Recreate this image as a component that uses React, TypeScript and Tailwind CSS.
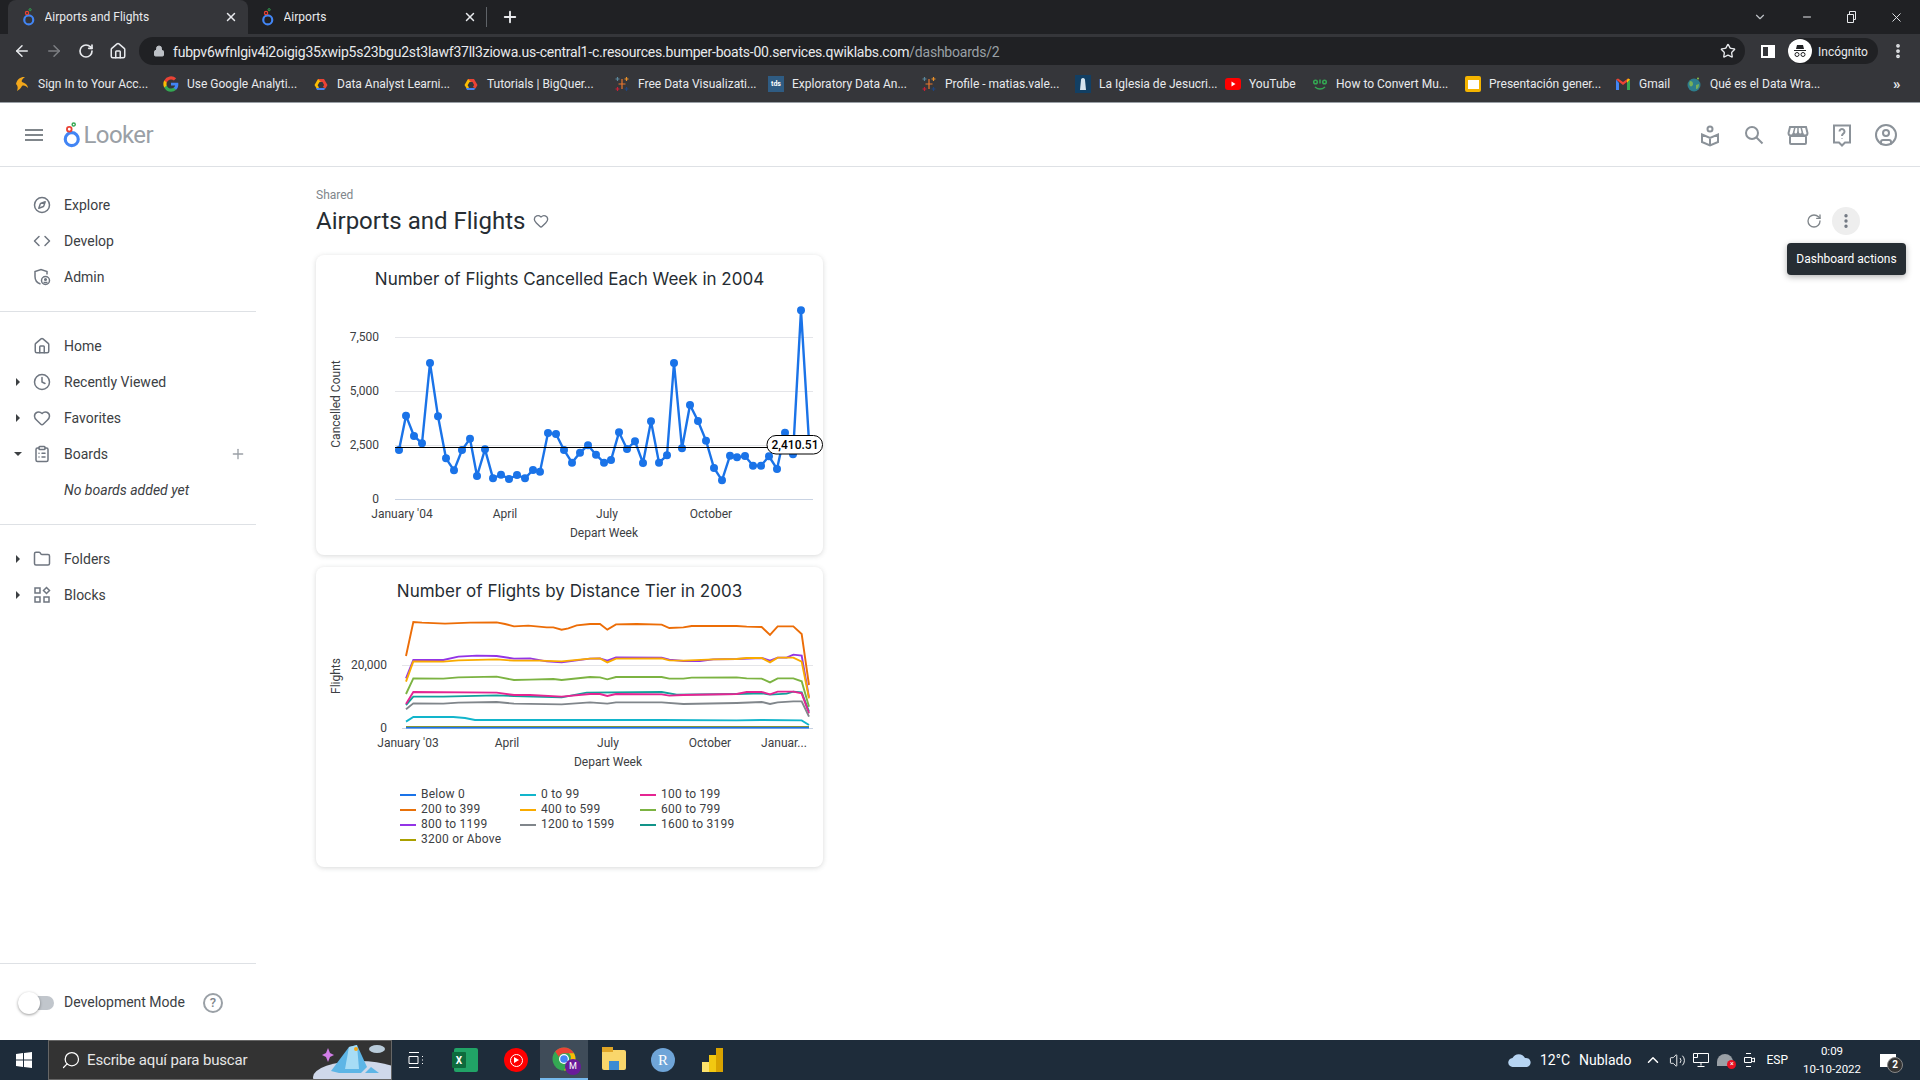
import { ChevronDown, Code, Compass, Clock, EllipsisVertical, Heart, Home, Lock, Minus, Plus, RotateCw, Search, Star, X, ArrowLeft, ArrowRight, House, Folder, ClipboardList, CircleUser, Volume2, ChevronUp } from 'lucide-react';
import type { ReactNode } from 'react';

const scale = (pts: number[][], ox: number, oy: number) => pts.map(([x, y]) => `${ox + x / 3},${oy + y / 3}`).join(' ');

const cancelled = [
  [27, 465], [48, 362], [72, 423], [96, 445], [120, 204], [144, 364], [168, 490], [192, 526], [216, 465], [240, 431],
  [261, 543], [285, 463], [309, 550], [333, 539], [357, 552], [381, 540], [405, 550], [429, 525], [450, 530], [474, 414],
  [498, 417], [522, 465], [546, 503], [570, 473], [594, 451], [618, 479], [642, 503], [663, 495], [687, 412], [711, 462],
  [735, 439], [759, 504], [783, 379], [807, 503], [831, 481], [852, 204], [876, 460], [900, 330], [924, 378], [948, 437],
  [972, 519], [996, 556], [1020, 482], [1041, 487], [1065, 483], [1089, 512], [1113, 512], [1137, 484], [1161, 522],
  [1185, 413], [1209, 478], [1233, 46], [1257, 440],
];

const tiers: { color: string; pts: number[][] }[] = [
  { color: '#ec6d07', pts: [[48, 138], [70, 36], [96, 38], [165, 41], [240, 38], [320, 37], [345, 42], [372, 49], [415, 47], [470, 52], [490, 52], [515, 59], [535, 55], [560, 46], [600, 42], [630, 42], [652, 59], [678, 43], [740, 42], [815, 44], [838, 54], [880, 52], [905, 48], [1040, 48], [1070, 50], [1115, 51], [1140, 75], [1163, 49], [1210, 49], [1235, 72], [1257, 225]] },
  { color: '#9334e6', pts: [[48, 205], [70, 150], [160, 150], [205, 140], [260, 137], [320, 138], [372, 146], [420, 145], [470, 154], [515, 157], [600, 146], [630, 145], [652, 152], [678, 142], [815, 143], [838, 149], [880, 153], [930, 153], [970, 148], [1040, 147], [1115, 144], [1140, 152], [1163, 143], [1190, 143], [1210, 134], [1235, 137], [1257, 262]] },
  { color: '#f9ab00', pts: [[48, 215], [70, 154], [160, 155], [205, 151], [320, 148], [372, 152], [450, 152], [515, 154], [600, 146], [630, 145], [652, 157], [678, 146], [815, 145], [838, 151], [880, 152], [970, 148], [1040, 147], [1070, 144], [1115, 144], [1140, 157], [1163, 143], [1210, 143], [1235, 155], [1257, 265]] },
  { color: '#7cb342', pts: [[48, 252], [70, 205], [160, 206], [205, 202], [320, 200], [372, 210], [420, 209], [490, 207], [515, 210], [600, 201], [630, 202], [652, 208], [678, 201], [815, 201], [838, 206], [880, 206], [905, 203], [1040, 202], [1070, 205], [1115, 206], [1140, 217], [1163, 205], [1210, 205], [1235, 214], [1257, 290]] },
  { color: '#12a09a', pts: [[48, 285], [70, 260], [160, 260], [320, 256], [372, 258], [515, 262], [590, 248], [815, 246], [860, 254], [1040, 252], [1115, 250], [1140, 254], [1190, 251], [1210, 245], [1235, 247], [1257, 305]] },
  { color: '#e52592', pts: [[48, 282], [70, 246], [320, 248], [372, 255], [420, 255], [515, 260], [600, 252], [630, 252], [652, 258], [678, 252], [815, 253], [838, 257], [880, 255], [1040, 252], [1070, 246], [1115, 246], [1140, 253], [1163, 245], [1210, 245], [1235, 250], [1257, 310]] },
  { color: '#80868b', pts: [[48, 298], [70, 280], [160, 281], [205, 278], [320, 276], [372, 281], [515, 283], [600, 277], [652, 281], [678, 277], [815, 277], [880, 282], [1040, 279], [1115, 276], [1140, 282], [1163, 277], [1210, 274], [1235, 274], [1257, 320]] },
  { color: '#12b5cb', pts: [[48, 335], [70, 321], [190, 321], [225, 324], [255, 330], [815, 330], [1040, 331], [1115, 330], [1235, 331], [1257, 345]] },
  { color: '#aaa000', pts: [[48, 351], [1257, 351]] },
  { color: '#1a73e8', pts: [[48, 353], [1257, 353]] },
];

const legend = [
  { label: 'Below 0', color: 'bg-[#1a73e8]' },
  { label: '0 to 99', color: 'bg-[#12b5cb]' },
  { label: '100 to 199', color: 'bg-[#e52592]' },
  { label: '200 to 399', color: 'bg-[#e8710a]' },
  { label: '400 to 599', color: 'bg-[#f9ab00]' },
  { label: '600 to 799', color: 'bg-[#7cb342]' },
  { label: '800 to 1199', color: 'bg-[#9334e6]' },
  { label: '1200 to 1599', color: 'bg-[#80868b]' },
  { label: '1600 to 3199', color: 'bg-[#129489]' },
  { label: '3200 or Above', color: 'bg-[#aaa000]' },
];

function LookerMark({ size }: { size: number }) {
  return (
    <svg width={size * 0.75} height={size} viewBox="0 0 15 20" fill="none">
      <circle cx="7.5" cy="13.2" r="5" stroke="#4285f4" strokeWidth="2.4" />
      <circle cx="5.6" cy="5.6" r="1.8" stroke="#ea4335" strokeWidth="1.4" />
      <circle cx="9" cy="1.9" r="1.2" stroke="#34a853" strokeWidth="1.1" />
    </svg>
  );
}

function GcpIcon() {
  return (
    <svg width="16" height="16" viewBox="0 0 16 16" fill="none">
      <path d="M4 13 1.5 9 5 3h3v3H6.5L4.6 9.2 6 11.5z" fill="#fbbc04" />
      <path d="M5 3h6l3.5 6-2 3.5-2.6-1.5 1.2-2L9.5 6H8z" fill="#ea4335" />
      <path d="M12.500 12.500 11 14H4l-1-2h8z" fill="#4285f4" />
    </svg>
  );
}

function TableauIcon() {
  return (
    <svg width="16" height="16" viewBox="0 0 16 16" strokeWidth="1.2" fill="none">
      <path d="M8 3v10M4.500 8h7" stroke="#e8762d" />
      <path d="M3.500 1v4M1.500 3h4" stroke="#5b879b" />
      <path d="M12.500 1v4M10.500 3h4" stroke="#eb9129" />
      <path d="M3.500 11v4M1.500 13h4" stroke="#c72035" />
      <path d="M12.500 11v4M10.500 13h4" stroke="#1f457e" />
    </svg>
  );
}

const bookmarks: { label: string; width: string; icon: ReactNode }[] = [
  {
    label: 'Sign In to Your Acc...',
    width: 'w-[149px]',
    icon: (
      <svg width="16" height="16" viewBox="0 0 16 16" fill="#f2a71b">
        <path d="M2 8C3 3 7 .5 11 1 8 3 7 5 8 6c3 1 6 3 6 6-2-2-4-3-6-2-1 2-3 4-5 5 1-3 1-5-1-7z" />
      </svg>
    ),
  },
  {
    label: 'Use Google Analyti...',
    width: 'w-[150px]',
    icon: (
      <svg width="16" height="16" viewBox="0 0 24 24">
        <path fill="#4285f4" d="M23 12.300c0-.8-.1-1.600-.2-2.300H12v4.400h6.200a5.300 5.300 0 0 1-2.300 3.400v2.900h3.700c2.200-2 3.400-5 3.400-8.400z" />
        <path fill="#34a853" d="M12 23.500c3.100 0 5.700-1 7.600-2.800l-3.700-2.900c-1 .7-2.300 1.100-3.900 1.100-3 0-5.500-2-6.400-4.700H1.800v3A11.500 11.500 0 0 0 12 23.500z" />
        <path fill="#fbbc05" d="M5.600 14.200a7 7 0 0 1 0-4.400v-3H1.800a11.500 11.500 0 0 0 0 10.400z" />
        <path fill="#ea4335" d="M12 5.100c1.700 0 3.200.6 4.400 1.700l3.300-3.300A11.500 11.500 0 0 0 1.800 6.800l3.800 3c.9-2.700 3.400-4.700 6.400-4.700z" />
      </svg>
    ),
  },
  { label: 'Data Analyst Learni...', width: 'w-[150px]', icon: <GcpIcon /> },
  { label: 'Tutorials | BigQuer...', width: 'w-[151px]', icon: <GcpIcon /> },
  { label: 'Free Data Visualizati...', width: 'w-[154px]', icon: <TableauIcon /> },
  {
    label: 'Exploratory Data An...',
    width: 'w-[153px]',
    icon: <span className="flex h-[16px] w-[16px] items-center justify-center bg-[#2f5c83] text-[7px] font-bold text-white">tds</span>,
  },
  { label: 'Profile - matias.vale...', width: 'w-[154px]', icon: <TableauIcon /> },
  {
    label: 'La Iglesia de Jesucri...',
    width: 'w-[150px]',
    icon: (
      <svg width="16" height="18" viewBox="0 0 16 18">
        <rect width="16" height="18" fill="#123f63" />
        <path d="M8 3c1.500 0 2 1 2 2l1 10H5l1-10c0-1 .5-2 2-2z" fill="#d6e4ee" />
      </svg>
    ),
  },
  {
    label: 'YouTube',
    width: 'w-[87px]',
    icon: (
      <svg width="16" height="16" viewBox="0 0 16 16">
        <rect y="2" width="16" height="12" rx="3" fill="#f00" />
        <path d="m6.500 5.500 4 2.500-4 2.500z" fill="#fff" />
      </svg>
    ),
  },
  {
    label: 'How to Convert Mu...',
    width: 'w-[153px]',
    icon: (
      <svg width="16" height="16" viewBox="0 0 16 16" fill="none" stroke="#34a853" strokeWidth="1.500">
        <circle cx="3.500" cy="6" r="1.800" />
        <circle cx="12.500" cy="6" r="1.800" />
        <path d="M8 3.500v4M3 11c3 2.500 7 2.500 10 0" />
      </svg>
    ),
  },
  {
    label: 'Presentación gener...',
    width: 'w-[150px]',
    icon: (
      <span className="flex h-[16px] w-[16px] items-center justify-center rounded-[2px] bg-[#f4b400]">
        <span className="h-[9px] w-[11px] bg-white" />
      </span>
    ),
  },
  {
    label: 'Gmail',
    width: 'w-[71px]',
    icon: (
      <svg width="16" height="16" viewBox="0 0 16 16">
        <path d="M1 3.500V14h3V7z" fill="#4285f4" />
        <path d="M15 3.500V14h-3V7z" fill="#34a853" />
        <path d="M1 3.500 8 9l7-5.500-2-1L8 6 3 2.500z" fill="#ea4335" />
        <path d="m12 7 3-3.500L13 2.500 12 4z" fill="#fbbc04" />
      </svg>
    ),
  },
  {
    label: 'Qué es el Data Wra...',
    width: 'w-[150px]',
    icon: (
      <svg width="16" height="16" viewBox="0 0 16 16">
        <circle cx="8" cy="9" r="6.500" fill="#2d7d8c" />
        <path d="M4 5c2 0 3 1 3 3s-2 3-3 2-1-3 0-5zM10 9l3-1c0 3-1 5-3 5z" fill="#76b058" />
        <circle cx="12" cy="2.500" r="1" fill="#8bc34a" />
      </svg>
    ),
  },
];

function ChromeTab({ title, active }: { title: string; active?: boolean }) {
  return (
    <div className={active ? 'flex h-[34px] w-[240px] items-center rounded-t-lg bg-[#35363a] pl-[14px] pr-[10px]' : 'flex h-[34px] w-[238px] items-center pl-[13px] pr-[9px]'}>
      <LookerMark size={18} />
      <span className="ml-[9px] flex-1 truncate text-[12px] text-[#e8eaed]">{title}</span>
      <X size={14} strokeWidth={2.5} className="text-[#e8eaed]" />
    </div>
  );
}

function SideItem({ icon, label, caret, italic }: { icon?: ReactNode; label: string; caret?: 'right' | 'down'; italic?: boolean }) {
  return (
    <div className="flex h-[36px] items-center">
      <div className="flex w-[30px] justify-center pl-[6px]">
        {caret === 'right' && <span className="h-0 w-0 border-y-[4px] border-l-[4px] border-y-transparent border-l-[#3c4043]" />}
        {caret === 'down' && <span className="h-0 w-0 border-x-[4px] border-t-[4px] border-x-transparent border-t-[#3c4043]" />}
      </div>
      <div className="flex w-[24px] justify-center text-[#6f7680]">{icon}</div>
      <span className={italic ? 'ml-[10px] text-[14px] italic text-[#3c4043]' : 'ml-[10px] text-[14px] text-[#3c4043]'}>{label}</span>
    </div>
  );
}

function CancelledChart() {
  const grid = [
    { y: 337.5, label: '7,500' },
    { y: 391.5, label: '5,000' },
    { y: 445.5, label: '2,500' },
    { y: 499.5, label: '0' },
  ];
  const months = [
    { x: 402, label: "January '04" },
    { x: 505, label: 'April' },
    { x: 607, label: 'July' },
    { x: 711, label: 'October' },
  ];
  const pts = cancelled.map(([x, y]) => [390 + x / 3, 295 + y / 3]);
  return (
    <svg viewBox="316 303 507 252" className="h-[252px] w-[507px] text-[12px]" fontFamily="Roboto, sans-serif" fill="#3c4043">
      {grid.map((g) => (
        <g key={g.label}>
          <line x1="395" x2="813" y1={g.y} y2={g.y} stroke={g.label === '0' ? '#c9d3e3' : '#e4e5e9'} />
          <text x="379" y={g.y + 3} textAnchor="end">{g.label}</text>
        </g>
      ))}
      {months.map((m) => (
        <text key={m.label} x={m.x} y={518} textAnchor="middle">{m.label}</text>
      ))}
      <text x="604" y="537" textAnchor="middle">Depart Week</text>
      <text transform="translate(340 404) rotate(-90)" textAnchor="middle">Cancelled Count</text>
      <polyline points={scale(cancelled, 390, 295)} fill="none" stroke="#1a73e8" strokeWidth="2.400" />
      {pts.map(([x, y], i) => (
        <circle key={i} cx={x} cy={y} r="4" fill="#1a73e8" />
      ))}
      <line x1="395" x2="770" y1="447.500" y2="447.500" stroke="#000" strokeWidth="1" />
      <rect x="767" y="435.500" width="55.500" height="18.500" rx="9" fill="#fff" stroke="#000" />
      <text x="795" y="449" textAnchor="middle" fill="#000" fontWeight="500">2,410.51</text>
    </svg>
  );
}

function TierChart() {
  const months = [
    { x: 408, label: "January '03" },
    { x: 507, label: 'April' },
    { x: 608, label: 'July' },
    { x: 710, label: 'October' },
    { x: 784, label: 'Januar...' },
  ];
  return (
    <svg viewBox="316 615 507 160" className="h-[160px] w-[507px] text-[12px]" fontFamily="Roboto, sans-serif" fill="#3c4043">
      <line x1="402" x2="813" y1="665.500" y2="665.500" stroke="#e4e5e9" />
      <line x1="402" x2="813" y1="728.500" y2="728.500" stroke="#c9d3e3" />
      <text x="387" y="669" textAnchor="end">20,000</text>
      <text x="387" y="732" textAnchor="end">0</text>
      {months.map((m) => (
        <text key={m.label} x={m.x} y={747} textAnchor="middle">{m.label}</text>
      ))}
      <text x="608" y="766" textAnchor="middle">Depart Week</text>
      <text transform="translate(340 676) rotate(-90)" textAnchor="middle">Flights</text>
      {tiers.map((t) => (
        <polyline key={t.color} points={scale(t.pts, 390, 610)} fill="none" stroke={t.color} strokeWidth="1.900" />
      ))}
    </svg>
  );
}

function Card({ title, children }: { title: string; children: ReactNode }) {
  return (
    <div className="h-[300px] w-[507px] rounded-lg bg-white shadow-[0_1px_5px_rgba(60,64,67,0.2)]">
      <div className="flex h-[48px] items-center justify-center pt-[2px] font-['Inter',sans-serif] text-[17px] text-[#262d33]">{title}</div>
      {children}
    </div>
  );
}

export default function App() {
  return (
    <div className="flex h-[1080px] w-[1920px] flex-col overflow-hidden bg-white font-['Roboto',sans-serif]">
      {/* Browser chrome */}
      <div className="flex h-[34px] items-center bg-[#202124] pl-[8px] text-[#e8eaed]">
        <ChromeTab title="Airports and Flights" active />
        <ChromeTab title="Airports" />
        <div className="h-[20px] w-px bg-[#5f6368]" />
        <Plus size={18} strokeWidth={2.5} className="ml-[14px]" />
        <div className="flex-1" />
        <ChevronDown size={14} className="mr-[34px] text-[#bdc1c6]" />
        <Minus size={12} className="mr-[32px]" />
        <svg width="12" height="12" viewBox="0 0 12 12" fill="none" stroke="currentColor" className="mr-[32px]">
          <path d="M2.500 3.500h6v8h-6zM4.500 3.500V.5h6v8h-2" />
        </svg>
        <X size={15} strokeWidth={1.500} className="mr-[16px]" />
      </div>
      <div className="flex h-[34px] items-center bg-[#35363a] text-[#e8eaed]">
        <ArrowLeft size={18} className="ml-[13px]" />
        <ArrowRight size={18} className="ml-[14px] text-[#7d7f83]" />
        <RotateCw size={16} strokeWidth={2.500} className="ml-[15px]" />
        <House size={18} className="ml-[15px]" />
        <div className="ml-[12px] flex h-[28px] w-[1606px] items-center rounded-full bg-[#202124] pl-[14px] pr-[9px]">
          <Lock size={12} className="fill-[#bdc1c6] text-[#bdc1c6]" />
          <span className="ml-[8px] flex-1 pt-[2px] text-[14px] tracking-[-0.016em]">
            fubpv6wfnlgiv4i2oigig35xwip5s23bgu2st3lawf37ll3ziowa.us-central1-c.resources.bumper-boats-00.services.qwiklabs.com
            <span className="text-[#9aa0a6]">/dashboards/2</span>
          </span>
          <Star size={16} />
        </div>
        <div className="ml-[16px] h-[13px] w-[14px] border-y-2 border-l-[2px] border-r-[7px] border-white" />
        <div className="ml-[13px] flex h-[26px] w-[90px] items-center rounded-full bg-[#202124]">
          <div className="flex h-[24px] w-[24px] items-center justify-center rounded-full bg-white">
            <svg width="16" height="16" viewBox="0 0 16 16" fill="#202124">
              <path d="M5 2h6l1 4H4zM2 7h12v1H2z" />
              <circle cx="5" cy="11.500" r="2" fill="none" stroke="#202124" />
              <circle cx="11" cy="11.500" r="2" fill="none" stroke="#202124" />
            </svg>
          </div>
          <span className="ml-[6px] pt-[2px] text-[12px]">Incógnito</span>
        </div>
        <EllipsisVertical size={18} strokeWidth={3} className="ml-[11px]" />
      </div>
      <div className="flex h-[35px] items-center border-b border-[#9aa0a6] bg-[#35363a] pb-[2px] pl-[14px] text-[12px] text-[#e8eaed]">
        {bookmarks.map((b) => (
          <div key={b.label} className={`flex shrink-0 items-center ${b.width}`}>
            <span className="flex w-[16px] shrink-0 justify-center">{b.icon}</span>
            <span className="ml-[8px] whitespace-nowrap">{b.label}</span>
          </div>
        ))}
        <span className="ml-[57px] text-[15px] font-bold">»</span>
      </div>

      {/* Looker header */}
      <div className="flex h-[64px] items-center border-b border-[#dee1e5] pl-[25px] pr-[22px]">
        <div className="flex flex-col gap-[3px]">
          <span className="h-[2px] w-[18px] bg-[#80868b]" />
          <span className="h-[2px] w-[18px] bg-[#80868b]" />
          <span className="h-[2px] w-[18px] bg-[#80868b]" />
        </div>
        <div className="ml-[19px] flex items-center">
          <LookerMark size={26} />
          <span className="ml-[2px] text-[24px] tracking-[-0.025em] text-[#9aa0a6]">Looker</span>
        </div>
        <div className="flex-1" />
        <div className="flex items-center gap-[20px] text-[#8b9299]">
          <svg width="24" height="24" viewBox="0 0 24 24" fill="none" stroke="currentColor" strokeWidth="2">
            <circle cx="12" cy="6" r="2.500" />
            <path d="M4 11.500 12 15l8-3.500V19l-8 3.500L4 19zM12 15v7.500" />
          </svg>
          <svg width="24" height="24" viewBox="0 0 24 24" fill="none" stroke="currentColor" strokeWidth="2">
            <circle cx="10" cy="10" r="6" />
            <path d="m14.500 14.500 6 6" />
          </svg>
          <svg width="24" height="24" viewBox="0 0 24 24" fill="none" stroke="currentColor" strokeWidth="2">
            <path d="M4 4h16l1.500 6a2.500 2.500 0 0 1-5 0 2.500 2.500 0 0 1-4.500 0 2.500 2.500 0 0 1-4.500 0 2.500 2.500 0 0 1-5 0z" />
            <path d="M9 4 7.500 10M15 4l1.500 6M12 4v6" strokeWidth="1.500" />
            <rect x="4" y="13" width="16" height="8" rx="1" />
          </svg>
          <svg width="24" height="24" viewBox="0 0 24 24" fill="none" stroke="currentColor" strokeWidth="2">
            <path d="M4 2.500h16v17h-5l-3 3-3-3H4z" />
            <path d="M9.500 8.500a2.500 2.500 0 1 1 3.800 2.100c-.9.600-1.300 1-1.300 2.400M12 15.500v.5" />
          </svg>
          <CircleUser size={24} strokeWidth={2} />
        </div>
      </div>

      <div className="flex min-h-0 flex-1">
        {/* Sidebar */}
        <aside className="flex w-[256px] shrink-0 flex-col">
          <div className="flex-1 pt-[20px]">
            <SideItem icon={<Compass size={18} />} label="Explore" />
            <SideItem icon={<Code size={18} />} label="Develop" />
            <SideItem
              icon={
                <svg width="18" height="18" viewBox="0 0 18 18" fill="none" stroke="currentColor" strokeWidth="1.500">
                  <path d="M7.500 16C4 15 2 12 2 8.500V3.500L8 1.500l6 2v3" />
                  <circle cx="12.500" cy="12.500" r="4" />
                  <circle cx="12.500" cy="11.500" r=".8" />
                  <path d="M10.500 14.500h4" />
                </svg>
              }
              label="Admin"
            />
            <div className="mt-[16px] h-px bg-[#dee1e5]" />
            <div className="pt-[16px]">
              <SideItem icon={<Home size={18} />} label="Home" />
              <SideItem icon={<Clock size={18} />} label="Recently Viewed" caret="right" />
              <SideItem icon={<Heart size={18} />} label="Favorites" caret="right" />
              <div className="relative">
                <SideItem icon={<ClipboardList size={18} />} label="Boards" caret="down" />
                <Plus size={16} className="absolute right-[10px] top-[10px] text-[#9aa0a6]" />
              </div>
              <SideItem label="No boards added yet" italic />
            </div>
            <div className="mt-[16px] h-px bg-[#dee1e5]" />
            <div className="pt-[16px]">
              <SideItem icon={<Folder size={18} />} label="Folders" caret="right" />
              <SideItem
                icon={
                  <svg width="18" height="18" viewBox="0 0 18 18" fill="none" stroke="currentColor" strokeWidth="1.500">
                    <path d="M2 2h5v5H2zM2 11h5v5H2zM11 11h5v5h-5zM13.500 1.500 16.500 4.500 13.500 7.500 10.500 4.500z" />
                  </svg>
                }
                label="Blocks"
                caret="right"
              />
            </div>
          </div>
          <div className="h-[77px] border-t border-[#dee1e5] pl-[18px] pt-[28px]">
            <div className="flex items-center">
              <div className="relative h-[14px] w-[36px] rounded-full bg-[#c1c6cc]">
                <span className="absolute left-0 top-[-4px] h-[22px] w-[22px] rounded-full bg-white shadow-[0_1px_3px_rgba(0,0,0,0.4)]" />
              </div>
              <span className="ml-[10px] text-[14px] text-[#3c4043]">Development Mode</span>
              <span className="ml-[18px] flex h-[20px] w-[20px] items-center justify-center rounded-full border-2 border-[#9aa0a6] text-[13px] font-medium text-[#80868b]">?</span>
            </div>
          </div>
        </aside>

        {/* Dashboard */}
        <main className="flex-1 pl-[60px] pr-[60px] pt-[21px]">
          <div className="text-[12px] leading-[14px] text-[#80868b]">Shared</div>
          <div className="mt-[2px] flex h-[34px] items-center">
            <h1 className="text-[24px] font-normal text-[#262d33]">Airports and Flights</h1>
            <Heart size={16} className="ml-[8px] text-[#6f7680]" />
            <div className="flex-1" />
            <RotateCw size={16} className="text-[#80868b]" />
            <div className="relative ml-[10px] flex h-[28px] w-[28px] items-center justify-center rounded-full bg-[#eeeeee] text-[#6f7680]">
              <EllipsisVertical size={18} strokeWidth={2.500} />
              <div className="absolute right-[-46px] top-[36px] flex h-[32px] w-[119px] items-center justify-center rounded-[4px] bg-[#262d33] text-[12px] text-white shadow-[0_2px_6px_rgba(0,0,0,0.3)]">
                Dashboard actions
              </div>
            </div>
          </div>
          <div className="mt-[17px] flex flex-col gap-[12px]">
            <Card title="Number of Flights Cancelled Each Week in 2004">
              <CancelledChart />
            </Card>
            <Card title="Number of Flights by Distance Tier in 2003">
              <TierChart />
              <div className="ml-[84px] mt-[12px] grid w-[360px] grid-cols-3 text-[12px] leading-[15px] tracking-[0.02em] text-[#3c4043]">
                {legend.map((l) => (
                  <div key={l.label} className="flex items-center">
                    <span className={`h-[2px] w-[16px] ${l.color}`} />
                    <span className="ml-[5px]">{l.label}</span>
                  </div>
                ))}
              </div>
            </Card>
          </div>
        </main>
      </div>

      {/* Windows taskbar */}
      <div className="flex h-[40px] items-center bg-[#1e2c3a] text-white">
        <div className="flex w-[48px] justify-center">
          <svg width="18" height="18" viewBox="0 0 18 18" fill="#fff">
            <path d="M1 3l7-1v6.500H1zM9 1.900 17 1v7.500H9zM1 9.500h7V16l-7-1zM9 9.500h8V17l-8-1.100z" />
          </svg>
        </div>
        <div className="relative flex h-[40px] w-[344px] items-center overflow-hidden border border-[#666] bg-[#333333] pl-[12px]">
          <Search size={20} strokeWidth={1.500} className="-scale-x-100 text-white" />
          <span className="ml-[6px] text-[15px] tracking-[-0.01em] text-[#e6e6e6]">Escribe aquí para buscar</span>
          <svg width="80" height="38" viewBox="0 0 80 38" className="absolute bottom-0 right-0">
            <ellipse cx="48" cy="36" rx="46" ry="16" fill="#cfd8ea" />
            <path d="M20 30 38 6l8-2 10 22-6 6H28z" fill="#5db5e6" />
            <path d="M38 6l8-2 2 24H34z" fill="#a7dcf5" />
            <path d="M54 32l6-6 8 6z" fill="#5db5e6" />
            <ellipse cx="66" cy="8" rx="8" ry="4" fill="#b9cbd9" />
            <circle cx="45" cy="8" r="2" fill="#f2a71b" />
            <path d="m15 12 2-5 2 5 4 2-4 2-2 5-2-5-4-2z" fill="#d27ee8" />
          </svg>
        </div>
        <div className="flex w-[48px] justify-center">
          <svg width="18" height="18" viewBox="0 0 18 18" fill="none" stroke="#fff">
            <path d="M2 1.500h10M2 16.500h10M2 5.500h9v7H2zM15 5.500h1M15 9h1M15 12.500h1" />
          </svg>
        </div>
        <div className="flex w-[52px] justify-center">
          <div className="relative h-[24px] w-[24px] rounded-[2px] bg-[#21a366]">
            <span className="absolute left-[-2px] top-[4px] flex h-[16px] w-[14px] items-center justify-center rounded-[1px] bg-[#0e6b3d] text-[10px] font-bold">X</span>
          </div>
        </div>
        <div className="flex w-[48px] justify-center">
          <div className="flex h-[24px] w-[24px] items-center justify-center rounded-full bg-[#f00]">
            <div className="flex h-[13px] w-[13px] items-center justify-center rounded-full border border-white">
              <span className="ml-px h-0 w-0 border-y-[3px] border-l-[5px] border-y-transparent border-l-white" />
            </div>
          </div>
        </div>
        <div className="flex h-[40px] w-[48px] items-center justify-center border-b-2 border-[#76b9ed] bg-[#3f4c59]">
          <div className="relative">
            <svg width="24" height="24" viewBox="0 0 24 24">
              <circle cx="12" cy="12" r="11.500" fill="#34a853" />
              <path d="M12 .5a11.500 11.500 0 0 1 10 5.800H12a5.700 5.700 0 0 0-5.200 3.400L3.200 4.500A11.500 11.500 0 0 1 12 .5z" fill="#ea4335" />
              <path d="M22 6.300A11.500 11.500 0 0 1 12 23.500l5-8.600A5.700 5.700 0 0 0 17 6.300z" fill="#fbbc04" />
              <circle cx="12" cy="12" r="5" fill="#fff" />
              <circle cx="12" cy="12" r="3.800" fill="#4285f4" />
            </svg>
            <span className="absolute bottom-[-4px] right-[-5px] flex h-[16px] w-[16px] items-center justify-center rounded-full bg-[#6a1b9a] text-[9px]">M</span>
          </div>
        </div>
        <div className="ml-[2px] flex w-[48px] justify-center">
          <div className="relative h-[20px] w-[24px] rounded-[2px] bg-[#f9d66b]">
            <span className="absolute left-0 top-[-3px] h-[5px] w-[11px] bg-[#e0a526]" />
            <span className="absolute bottom-0 left-[7px] h-[9px] w-[10px] bg-[#3b8bd4]" />
          </div>
        </div>
        <div className="flex w-[50px] justify-center">
          <span className="flex h-[24px] w-[24px] items-center justify-center rounded-full bg-[#6fa5d8] font-['Liberation_Serif',serif] text-[15px]">R</span>
        </div>
        <div className="flex w-[48px] justify-center">
          <div className="flex h-[24px] items-end gap-0">
            <span className="h-[10px] w-[7px] bg-[#fde36c]" />
            <span className="h-[17px] w-[7px] bg-[#f2c811]" />
            <span className="h-[24px] w-[7px] bg-[#d9a300]" />
          </div>
        </div>
        <div className="flex-1" />
        <svg width="24" height="14" viewBox="0 0 24 14" fill="#b6d4f2">
          <path d="M5 14a4.500 4.500 0 0 1-.5-9A7 7 0 0 1 17 5a4.500 4.500 0 0 1 2 9z" />
        </svg>
        <span className="ml-[8px] text-[14px]">12°C</span>
        <span className="ml-[9px] text-[14px]">Nublado</span>
        <ChevronUp size={18} className="ml-[13px]" />
        <Volume2 size={17} strokeWidth={1.300} className="ml-[7px]" />
        <svg width="16" height="14" viewBox="0 0 16 14" fill="none" stroke="#fff" className="ml-[7px]">
          <path d="M4.500.5h11v9H.5V.5h4v4H.5M8 9.500v3M4.500 13.500h7" />
        </svg>
        <div className="relative ml-[8px] h-[12px] w-[16px] rounded-t-full bg-[#9aa0a6]">
          <span className="absolute bottom-[-3px] right-[-3px] flex h-[9px] w-[9px] items-center justify-center rounded-full bg-[#e81123] text-[7px] leading-none">×</span>
        </div>
        <svg width="14" height="16" viewBox="0 0 14 16" fill="none" stroke="#fff" className="ml-[10px]">
          <path d="M3 1.500h5M3 14.500h5M1.500 5.500h7v5h-7zM8.500 7l3-1v4l-3-1" />
        </svg>
        <span className="ml-[9px] text-[12px]">ESP</span>
        <div className="ml-[12px] flex w-[64px] flex-col items-center text-[11.500px] leading-[18px]">
          <span>0:09</span>
          <span>10-10-2022</span>
        </div>
        <div className="relative ml-[16px] mr-[24px] h-[13px] w-[16px] bg-white">
          <span className="absolute left-[-1px] top-[3px] flex h-[16px] w-[16px] translate-x-[8px] items-center justify-center rounded-full border border-[#888] bg-[#333] text-[10px] font-bold">2</span>
        </div>
      </div>
    </div>
  );
}
